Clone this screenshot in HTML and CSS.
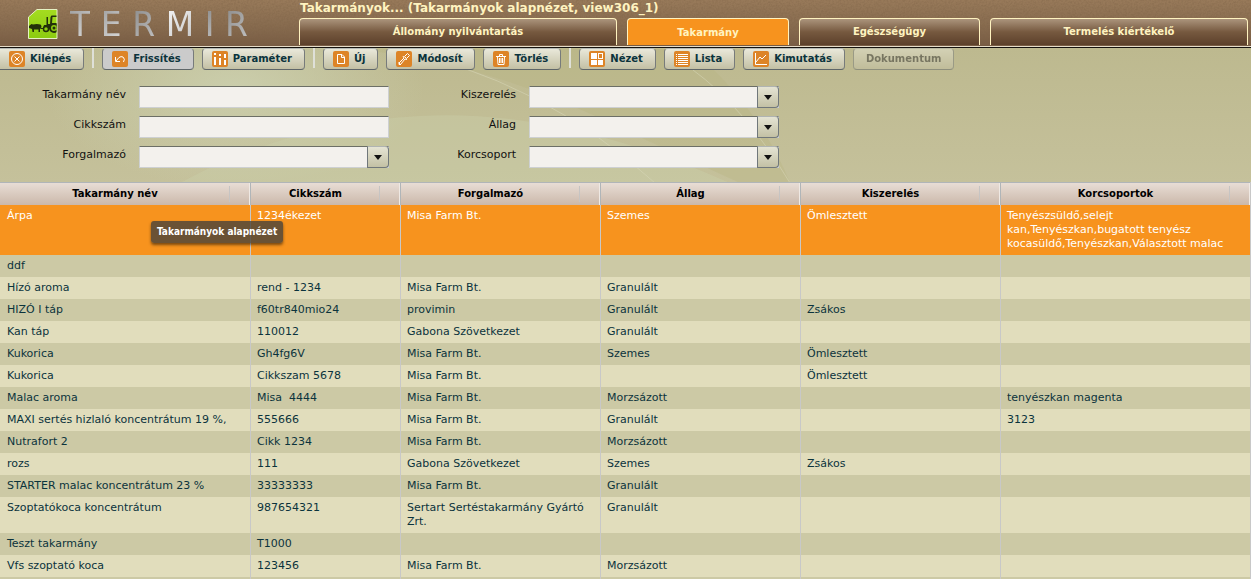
FILE: index.html
```
<!DOCTYPE html>
<html lang="hu">
<head>
<meta charset="utf-8">
<title>Termir – Takarmányok</title>
<meta name="viewport" content="width=device-width, initial-scale=1">
<link rel="stylesheet" href="styles.css">
</head>
<body>
<header class="header">
  <svg class="grain" aria-hidden="true"><filter id="grain"><feTurbulence type="fractalNoise" baseFrequency="0.55" numOctaves="2"/><feColorMatrix values="0 0 0 0 0.2  0 0 0 0 0.12  0 0 0 0 0.06  1.6 0 0 0 -0.6"/></filter><rect width="100%" height="100%" filter="url(#grain)"/></svg>
  <div class="brand">
    <svg class="logo" viewBox="0 0 30 30" aria-hidden="true">
      <defs>
        <linearGradient id="lg" x1="0" y1="0" x2="0" y2="1"><stop offset="0" stop-color="#a4dc20"/><stop offset="1" stop-color="#8ccb10"/></linearGradient>
        <clipPath id="tile"><path d="M9 1H28.500V29H1V8Z"/></clipPath>
      </defs>
      <path d="M9 .5H29V29.500H.5V8Z" fill="url(#lg)" stroke="#e6f2c4"/>
      <g clip-path="url(#tile)">
        <path d="M1 17l2.500-2 1.500.5q4-1 7.500 0l1 1.500-.5 2.500-1 .5v3h-1.500V20.500H6V23H4.500l-.5-3-3-1z" fill="#23300a"/>
        <path d="M13 19h2l1-3h2.500V8H20v7h2l.5-7 1-1.500H29V8h-4.500l-.5 6h5v6H13z" fill="#23300a"/>
        <circle cx="18" cy="20" r="2.500" fill="#8ccb10" stroke="#23300a" stroke-width="1.500"/>
        <circle cx="26" cy="19" r="4" fill="#8ccb10" stroke="#23300a" stroke-width="2"/>
        <circle cx="26" cy="19" r="1.500" fill="#23300a"/>
      </g>
    </svg>
    <div class="wordmark" aria-label="TERMIR"><span>T</span><span>E</span><span>R</span><span>M</span><span>I</span><span>R</span></div>
  </div>
  <div class="heading">
    <h1 class="title">Takarmányok... (Takarmányok alapnézet, view306_1)</h1>
    <nav class="tabs">
      <a class="tab" href="#allomany">Állomány nyilvántartás</a>
      <a class="tab tab-active" href="#takarmany">Takarmány</a>
      <a class="tab" href="#egeszseg">Egészségügy</a>
      <a class="tab" href="#termeles">Termelés kiértékelő</a>
    </nav>
  </div>
</header>

<main class="main">
  <svg class="backdrop" viewBox="0 0 1251 135" preserveAspectRatio="none" aria-hidden="true">
    <defs><radialGradient id="glow" cx=".5" cy=".5" r=".5"><stop offset="0" stop-color="#cdd2b2" stop-opacity=".8"/><stop offset="1" stop-color="#cdd2b2" stop-opacity="0"/></radialGradient></defs>
    <ellipse cx="235" cy="40" rx="190" ry="100" fill="url(#glow)"/>
    <path d="M180 135Q290 75 420 68Q560 60 730 135Z" fill="#cbcfa9" opacity=".4"/>
    <path d="M340 0Q480 10 620 80L740 135H790Q760 60 690 0Z" fill="#b5b27f" opacity=".3"/>
    <path d="M390 0Q540 30 655 135M693 22Q745 60 790 135" fill="none" stroke="#d9dabb" opacity=".5"/>
  </svg>

  <div class="toolbar" role="toolbar">
    <button class="btn btn-first" type="button"><svg class="icon" viewBox="0 0 16 16"><circle cx="8" cy="8" r="5.500"/><path d="M5.500 5.500l5 5M10.500 5.500l-5 5"/></svg>Kilépés</button>
    <span class="sep"></span>
    <button class="btn btn-pressed" type="button"><svg class="icon" viewBox="0 0 16 16"><path d="M3.500 6v4.500H8M4 10l3-3.500Q9 5 11 6q2.500 2 .5 5"/></svg>Frissítés</button>
    <button class="btn" type="button"><svg class="icon" viewBox="0 0 16 16"><path stroke-width="2" d="M3 2v2M3 6v8M8 3v2M8 7v7M13 3v4M13 9v5"/></svg>Paraméter</button>
    <span class="sep"></span>
    <button class="btn" type="button"><svg class="icon" viewBox="0 0 16 16"><path d="M4.500 3.500H9L11.500 6v6.500h-7zM8.500 3.500v3h3"/></svg>Új</button>
    <button class="btn" type="button"><svg class="icon" viewBox="0 0 16 16"><path d="M9 8l-4.500 5.500L3 12l5-5M8 7l-1-2M9 8l2 .5M5 13.500H3V11"/><path d="M8.500 5.500l3-3 2 2-3 3z"/></svg>Módosít</button>
    <button class="btn" type="button"><svg class="icon" viewBox="0 0 16 16"><path d="M3 5.500h10M6.500 5V3.500h3V5M4.500 6l.5 7.500h6l.5-7.500M6.500 7v5M8 7v5M9.500 7v5"/></svg>Törlés</button>
    <span class="sep"></span>
    <button class="btn" type="button"><svg class="icon" viewBox="0 0 16 16"><path d="M2 2h6v6H2zM9 2h5v6H9zM2 9h6v5H2zM9 9h5v5H9z" class="solid"/><path d="M10 3h3v4h-3z" class="cut"/></svg>Nézet</button>
    <button class="btn" type="button"><svg class="icon" viewBox="0 0 16 16"><path d="M2 3.500h1M4 3.500h10M2 5.500h1M4 5.500h10M2 7.500h1M4 7.500h10M2 9.500h1M4 9.500h10M2 11.500h1M4 11.500h10M2 13.500h1M4 13.500h10"/></svg>Lista</button>
    <button class="btn" type="button"><svg class="icon" viewBox="0 0 16 16"><path d="M2.500 2v11.500H14M3 11l4-5 2 2 4-4"/></svg>Kimutatás</button>
    <button class="btn" type="button" disabled>Dokumentum</button>
  </div>

  <form class="filters">
    <label for="nev">Takarmány név</label>
    <input class="field" id="nev" type="text">
    <label for="kiszereles">Kiszerelés</label>
    <div class="combo"><select class="field" id="kiszereles"><option></option></select><span class="arrow"></span></div>
    <label for="cikkszam">Cikkszám</label>
    <input class="field" id="cikkszam" type="text">
    <label for="allag">Állag</label>
    <div class="combo"><select class="field" id="allag"><option></option></select><span class="arrow"></span></div>
    <label for="forgalmazo">Forgalmazó</label>
    <div class="combo"><select class="field" id="forgalmazo"><option></option></select><span class="arrow"></span></div>
    <label for="korcsoport">Korcsoport</label>
    <div class="combo"><select class="field" id="korcsoport"><option></option></select><span class="arrow"></span></div>
  </form>

  <div class="list">
    <table class="grid">
      <colgroup><col class="c-wide"><col class="c-code"><col class="c-mid"><col class="c-mid"><col class="c-mid"><col class="c-wide"></colgroup>
      <thead><tr><th>Takarmány név</th><th>Cikkszám</th><th>Forgalmazó</th><th>Állag</th><th>Kiszerelés</th><th>Korcsoportok</th></tr></thead>
      <tbody>
        <tr class="selected"><td>Árpa</td><td>1234ékezet</td><td>Misa Farm Bt.</td><td>Szemes</td><td>Ömlesztett</td><td>Tenyészsüldő,selejt kan,Tenyészkan,bugatott tenyész kocasüldő,Tenyészkan,Választott malac</td></tr>
        <tr><td>ddf</td><td></td><td></td><td></td><td></td><td></td></tr>
        <tr><td>Hízó aroma</td><td>rend - 1234</td><td>Misa Farm Bt.</td><td>Granulált</td><td></td><td></td></tr>
        <tr><td>HIZÓ I táp</td><td>f60tr840mio24</td><td>provimin</td><td>Granulált</td><td>Zsákos</td><td></td></tr>
        <tr><td>Kan táp</td><td>110012</td><td>Gabona Szövetkezet</td><td>Granulált</td><td></td><td></td></tr>
        <tr><td>Kukorica</td><td>Gh4fg6V</td><td>Misa Farm Bt.</td><td>Szemes</td><td>Ömlesztett</td><td></td></tr>
        <tr><td>Kukorica</td><td>Cikkszam 5678</td><td>Misa Farm Bt.</td><td></td><td>Ömlesztett</td><td></td></tr>
        <tr><td>Malac aroma</td><td>Misa&nbsp; 4444</td><td>Misa Farm Bt.</td><td>Morzsázott</td><td></td><td>tenyészkan magenta</td></tr>
        <tr><td>MAXI sertés hizlaló koncentrátum 19 %,</td><td>555666</td><td>Misa Farm Bt.</td><td>Granulált</td><td></td><td>3123</td></tr>
        <tr><td>Nutrafort 2</td><td>Cikk 1234</td><td>Misa Farm Bt.</td><td>Morzsázott</td><td></td><td></td></tr>
        <tr><td>rozs</td><td>111</td><td>Gabona Szövetkezet</td><td>Szemes</td><td>Zsákos</td><td></td></tr>
        <tr><td>STARTER malac koncentrátum 23 %</td><td>33333333</td><td>Misa Farm Bt.</td><td>Granulált</td><td></td><td></td></tr>
        <tr><td>Szoptatókoca koncentrátum</td><td>987654321</td><td>Sertart Sertéstakarmány Gyártó Zrt.</td><td>Granulált</td><td></td><td></td></tr>
        <tr><td>Teszt takarmány</td><td>T1000</td><td></td><td></td><td></td><td></td></tr>
        <tr><td>Vfs szoptató koca</td><td>123456</td><td>Misa Farm Bt.</td><td>Morzsázott</td><td></td><td></td></tr>
        <tr><td></td><td></td><td></td><td></td><td></td><td></td></tr>
      </tbody>
    </table>
    <div class="tooltip" role="tooltip">Takarmányok alapnézet</div>
  </div>
</main>
</body>
</html>
```

FILE: styles.css
```
* { box-sizing: border-box; }

body {
  margin: 0;
  height: 100vh;
  overflow: hidden;
  display: flex;
  flex-direction: column;
  font: 11px/14px "DejaVu Sans", Verdana, sans-serif;
  color: #0b333c;
  background: #c3bf98;
}

.header {
  position: relative;
  display: flex;
  flex: none;
  background: linear-gradient(#987a5a, #866a4e 60%, #775b43);
  border-bottom: 1px solid #16120e;
  box-shadow: inset 0 -1px #e6dcc8;
}
.grain { position: absolute; inset: 0; width: 100%; height: 45px; opacity: .5; }

.brand {
  position: relative;
  display: flex;
  gap: 12px;
  width: 299px;
  padding: 9px 0 0 28px;
}
.logo { width: 30px; height: 30px; }
.wordmark {
  display: flex;
  justify-content: space-between;
  width: 178px;
  font-size: 33px;
  line-height: 32px;
}
.wordmark span {
  color: transparent;
  background: linear-gradient(135deg, #a0a0a0, #e4e4e4);
  background-clip: text;
  -webkit-background-clip: text;
}
.wordmark span:nth-child(3), .wordmark span:nth-child(5), .wordmark span:nth-child(6) {
  background-image: linear-gradient(135deg, #8c8c8c, #c8c8c8);
}
.wordmark span:nth-child(4) { background-image: linear-gradient(135deg, #f4f4f4, #c0c0c0); }

.heading { position: relative; flex: 1; padding: 0 3px 2px 0; }
.title {
  margin: 0;
  padding: 0 0 1px 1px;
  font-size: 12px;
  line-height: 17px;
  color: #fff3c0;
}
.tabs {
  display: grid;
  grid-template-columns: 318fr 162fr 181fr 258fr;
  gap: 10px;
}
.tab {
  height: 27px;
  border: 1px solid #fff3c0;
  border-bottom: 0;
  border-radius: 4px 4px 0 0;
  background: linear-gradient(#ab947c, #76593f 50%, #5c402b);
  color: #fff3c0;
  font-size: 10px;
  font-weight: bold;
  line-height: 26px;
  text-align: center;
  text-decoration: none;
}
.tab-active { background: #f7931e; line-height: 28px; }

.main { position: relative; flex: 1; display: flex; flex-direction: column; min-height: 0; }
.backdrop {
  position: absolute;
  inset: 0 0 auto;
  width: 100%;
  height: 135px;
  background: linear-gradient(#bdb98f, #c5c19b);
}

.toolbar { position: relative; display: flex; gap: 8px; }
.btn {
  display: flex;
  align-items: center;
  gap: 5px;
  height: 22px;
  padding: 0 12px 0 9px;
  border: 1px solid #777b7b;
  border-top-color: #b4b8b4;
  border-bottom-color: #5f6668;
  border-radius: 4px;
  background: linear-gradient(#e9e8da, #c3c0a4);
  color: #0b333c;
  font: bold 10px/14px "DejaVu Sans", Verdana, sans-serif;
}
.btn-first { border-left: 0; border-radius: 0 4px 4px 0; }
.btn-pressed { background: #cbcbcb; }
.btn:disabled { padding: 0 12px; color: #333; opacity: .5; }
.icon {
  width: 16px;
  height: 16px;
  border-radius: 2px;
  background: #dd8427;
  fill: none;
  stroke: #fff;
}
.icon .solid { fill: #fff; stroke: none; }
.icon .cut { fill: #dd8427; stroke: none; }
.sep { width: 2px; height: 20px; background: #dfe0d8; }

.filters {
  position: relative;
  display: grid;
  grid-template-columns: 126px 250px 114px 250px;
  gap: 8px 13px;
  padding: 16px 0 14px;
  color: #111;
}
.filters label { padding-top: 2px; text-align: right; }
.field {
  display: block;
  width: 100%;
  height: 22px;
  margin: 0;
  padding: 0 4px;
  border: 1px solid #cdd0d2;
  border-top-color: #6c6f66;
  border-radius: 0;
  background: #f3f1ed;
  font: inherit;
  appearance: none;
}
.combo { position: relative; }
.arrow {
  position: absolute;
  inset: 0 0 0 auto;
  width: 22px;
  border: 1px solid #70777a;
  border-top-color: #b0b4b2;
  border-radius: 0 4px 4px 0;
  background: linear-gradient(#e5e4d4, #c3c1a5);
  pointer-events: none;
}
.arrow::after {
  content: "";
  position: absolute;
  inset: 8px auto auto 6px;
  border: solid transparent;
  border-width: 5px 4px 0;
  border-top-color: #111;
}

.list { position: relative; border-right: 1px solid #c8c8c8; }
.grid { width: 100%; table-layout: fixed; border-collapse: separate; border-spacing: 0; }
.c-wide { width: 20%; }
.c-code { width: 12%; }
.c-mid { width: 16%; }

.grid th {
  position: relative;
  height: 23px;
  padding: 0 20px 0 0;
  border-top: 1px solid #b0b5b8;
  border-left: 1px solid #b0b5b8;
  background: linear-gradient(#e8ddd5, #cbb8aa);
  box-shadow: inset -1px 0 #efe9e4;
  color: #000;
  font-size: 10px;
}
.grid th::after {
  content: "";
  position: absolute;
  inset: 3px 20px 3px auto;
  width: 1px;
  background: #c6c4c3;
}
.grid td {
  height: 22px;
  padding: 4px 12px 4px 6px;
  border-left: 1px solid #c8c8c8;
  vertical-align: top;
}
.grid tr > :first-child { border-left: 0; }
.grid td:first-child { padding-left: 7px; }
.grid tbody tr { background: #e1ddbc; }
.grid tbody tr:nth-child(even) { background: #ccc9a5; }
.grid tbody .selected { background: #f7931e; color: #fff; }

.tooltip {
  position: absolute;
  top: 39px;
  left: 151px;
  padding: 4px 6px;
  border-radius: 3px;
  background: rgba(75, 68, 58, .82);
  box-shadow: 0 2px 3px rgba(0, 0, 0, .5);
  color: #fff;
  font-family: "DejaVu Sans Condensed", Tahoma, sans-serif;
  font-size: 10px;
  font-weight: bold;
}
```
